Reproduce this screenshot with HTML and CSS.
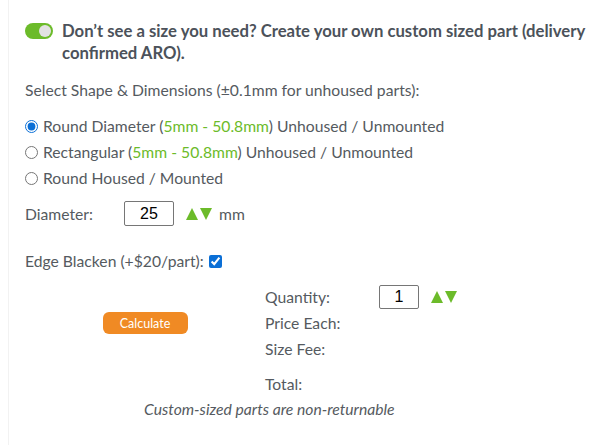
FILE: index.html
```html
<!DOCTYPE html>
<html lang="en">
<head>
    <meta charset="UTF-8">
    <meta name="viewport" content="width=device-width, initial-scale=1.0">
    <title>Custom Size</title>
    <link rel="stylesheet" href="styles.css">
</head>
<body>
    <div class="panel">
        <div class="intro">
            <span class="toggle"><span class="knob"></span></span>
            <h2>Don’t see a size you need? Create your own custom sized part (delivery confirmed ARO).</h2>
        </div>

        <p class="lead">Select Shape &amp; Dimensions (±0.1mm for unhoused parts):</p>

        <div class="shapes">
            <label class="shape">
                <input type="radio" name="shape" checked>
                <span>Round Diameter (<span class="range">5mm - 50.8mm</span>) Unhoused / Unmounted</span>
            </label>
            <label class="shape">
                <input type="radio" name="shape">
                <span>Rectangular (<span class="range">5mm - 50.8mm</span>) Unhoused / Unmounted</span>
            </label>
            <label class="shape">
                <input type="radio" name="shape">
                <span>Round Housed / Mounted</span>
            </label>
        </div>

        <div class="dim">
            <span class="dim-label">Diameter:</span>
            <input class="num" type="text" value="25">
            <span class="arrows"><span class="up"></span><span class="down"></span></span>
            <span class="unit">mm</span>
        </div>

        <label class="blacken">
            <span>Edge Blacken (+$20/part):</span>
            <input type="checkbox" checked>
        </label>

        <div class="quote">
            <div class="quote-action">
                <button type="button" class="calc">Calculate</button>
            </div>
            <div class="quote-rows">
                <div class="qrow">
                    <span class="qlabel">Quantity:</span>
                    <input class="num qty" type="text" value="1">
                    <span class="arrows"><span class="up"></span><span class="down"></span></span>
                </div>
                <div class="qrow">
                    <span class="qlabel">Price Each:</span>
                </div>
                <div class="qrow">
                    <span class="qlabel">Size Fee:</span>
                </div>
                <div class="qrow total">
                    <span class="qlabel">Total:</span>
                </div>
            </div>
        </div>

        <p class="note">Custom-sized parts are non-returnable</p>
    </div>
</body>
</html>
```

FILE: styles.css
```css
body {
    margin: 0;
    background-color: #fff;
    font-family: Lato, "Open Sans", Arial, sans-serif;
    color: #555a60;
}

.panel {
    margin-left: 8px;
    border-left: 1px solid #f2f2f2;
    padding: 20px 16px 20px 16px;
    min-height: 405px;
}

.intro {
    display: flex;
    align-items: flex-start;
    gap: 9px;
}

.toggle {
    flex: none;
    width: 28px;
    height: 16px;
    margin-top: 3px;
    border-radius: 8px;
    background-color: #6cbb2a;
    position: relative;
}

.knob {
    position: absolute;
    right: 2px;
    top: 2px;
    width: 12px;
    height: 12px;
    border-radius: 50%;
    background-color: #e2e2e2;
}

.intro h2 {
    margin: 0;
    font-size: 16.7px;
    line-height: 22px;
    font-weight: 700;
    color: #4c525a;
}

.lead {
    margin: 16px 0 16px;
    font-size: 15.7px;
    line-height: 20px;
}

.shapes {
    display: flex;
    flex-direction: column;
    gap: 6px;
}

.shape {
    display: flex;
    align-items: center;
    gap: 5px;
    font-size: 15.7px;
    line-height: 20px;
}

.shape input {
    margin: 0;
    width: 13px;
    height: 13px;
    accent-color: #0b6fd6;
}

.range {
    color: #6cbb2a;
}

.dim {
    display: flex;
    align-items: center;
    margin-top: 13px;
    font-size: 15.7px;
}

.dim-label {
    width: 99px;
}

.num {
    width: 50px;
    height: 25px;
    box-sizing: border-box;
    border: 1px solid #767676;
    border-radius: 2px;
    font-family: Arial, sans-serif;
    font-size: 16px;
    text-align: center;
    color: #000;
    padding: 0;
}

.arrows {
    display: inline-flex;
    gap: 2px;
    margin-left: 12px;
}

.up,
.down {
    width: 0;
    height: 0;
    border-left: 6px solid transparent;
    border-right: 6px solid transparent;
}

.up {
    border-bottom: 12px solid #6cbb2a;
}

.down {
    border-top: 12px solid #6cbb2a;
}

.unit {
    margin-left: 7px;
}

.blacken {
    display: flex;
    align-items: center;
    gap: 5px;
    margin-top: 26px;
    font-size: 15.7px;
}

.blacken input {
    margin: 0;
    width: 13px;
    height: 13px;
    accent-color: #0b6fd6;
}

.quote {
    display: flex;
    margin-top: 14px;
}

.quote-action {
    width: 240px;
    display: flex;
    justify-content: center;
    padding-top: 28px;
}

.calc {
    align-self: flex-start;
    width: 85px;
    height: 22px;
    border: none;
    border-radius: 6px;
    background-color: #f08a24;
    color: #fff;
    font-family: Lato, "Open Sans", Arial, sans-serif;
    font-size: 12.5px;
    cursor: pointer;
}

.quote-rows {
    font-size: 15.7px;
}

.qrow {
    display: flex;
    align-items: center;
    height: 26px;
}

.qlabel {
    width: 114px;
}

.qty {
    width: 40px;
    height: 24px;
}

.total {
    margin-top: 9px;
}

.note {
    margin: 3px 0 0 119px;
    font-size: 15.7px;
    font-style: italic;
}
```
